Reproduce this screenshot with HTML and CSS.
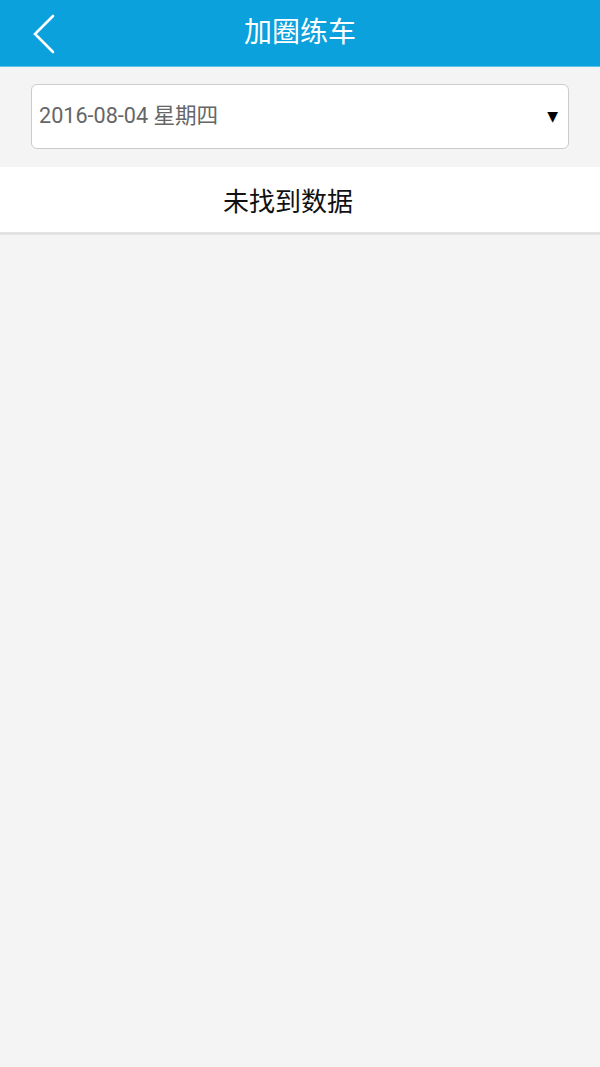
FILE: index.html
```html
<!DOCTYPE html>
<html lang="zh">
<head>
<meta charset="utf-8">
<link rel="stylesheet" href="styles.css">
</head>
<body>
<header class="topbar">
  <svg class="back" width="30" height="44" viewBox="0 0 30 44">
    <polyline points="22,5 4,23 22,41" fill="none" stroke="#fff" stroke-width="2.6" stroke-linecap="round" stroke-linejoin="miter"/>
  </svg>
  <h1 class="title">加圈练车</h1>
</header>
<div class="picker-wrap">
  <div class="picker">
    <span class="date">2016-08-04 星期四</span>
    <span class="arrow">▼</span>
  </div>
</div>
<div class="empty">未找到数据</div>
</body>
</html>
```
FILE: styles.css
```css
html, body {
  margin: 0;
  padding: 0;
  background: #f4f4f4;
  font-family: Roboto, "Noto Sans CJK SC", sans-serif;
}
.topbar {
  position: relative;
  height: 66px;
  background: #0aa1dc;
  border-bottom: 1px solid #5dc2ea;
  display: flex;
  align-items: center;
  justify-content: center;
}
.back {
  position: absolute;
  left: 31px;
  top: 11px;
}
.title {
  margin: 0;
  color: #fff;
  font-weight: normal;
  font-size: 28px;
  line-height: 1;
}
.picker-wrap {
  padding: 17px 31px 18px 31px;
}
.picker {
  height: 63px;
  background: #fff;
  border: 1px solid #cccccc;
  border-radius: 6px;
  display: flex;
  align-items: center;
  justify-content: space-between;
  padding: 0 10px 0 7px;
}
.date {
  color: #666;
  font-size: 21.6px;
  line-height: 1;
  margin-top: -2px;
}
.arrow {
  color: #000;
  font-size: 14px;
  font-family: "DejaVu Sans", sans-serif;
  margin-top: -2px;
}
.empty {
  height: 65px;
  background: #fff;
  border-bottom: 3px solid #e2e2e2;
  display: flex;
  align-items: center;
  justify-content: center;
  font-size: 26px;
  color: #111;
  padding-right: 24px;
}
```
